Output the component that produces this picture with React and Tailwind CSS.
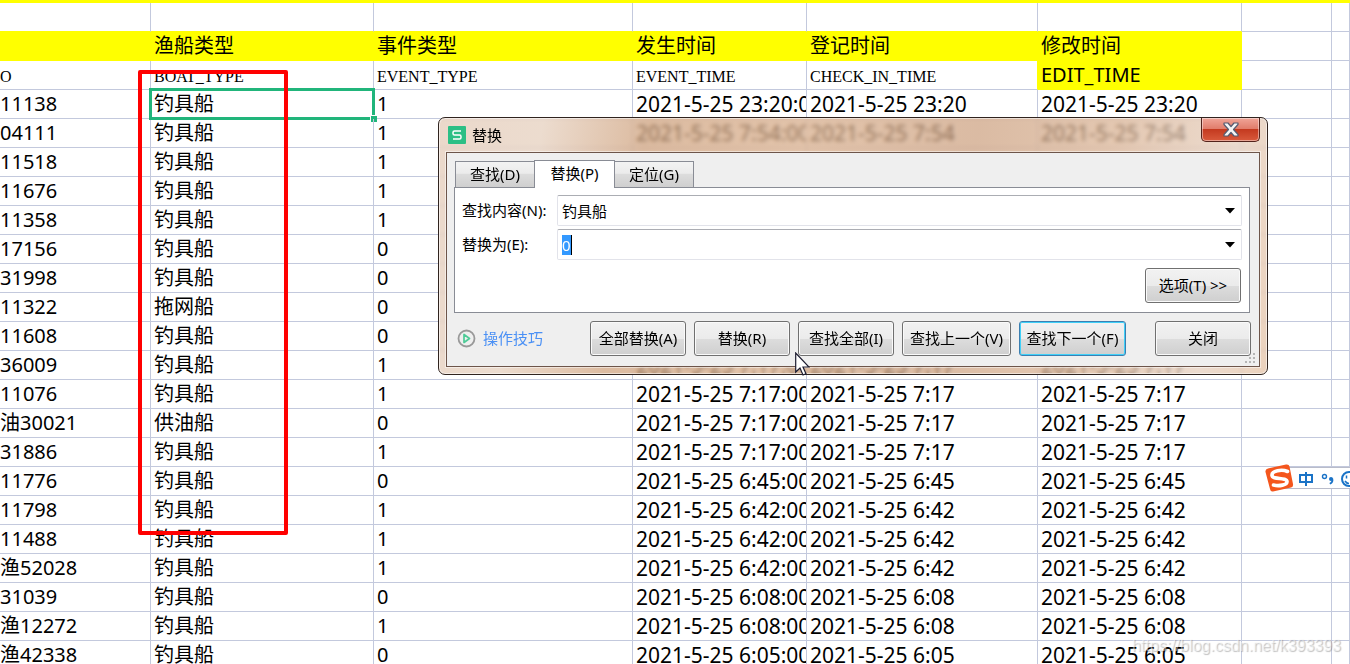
import React from 'react'
import { clsx } from 'clsx'

const rows = [
  ['11138', '钓具船', '1', '2021-5-25 23:20:00', '2021-5-25 23:20'],
  ['04111', '钓具船', '1', '2021-5-25 7:54:00', '2021-5-25 7:54'],
  ['11518', '钓具船', '1', '', ''],
  ['11676', '钓具船', '1', '', ''],
  ['11358', '钓具船', '1', '', ''],
  ['17156', '钓具船', '0', '', ''],
  ['31998', '钓具船', '0', '', ''],
  ['11322', '拖网船', '0', '', ''],
  ['11608', '钓具船', '0', '', ''],
  ['36009', '钓具船', '1', '2021-5-25 7:17:00', '2021-5-25 7:17'],
  ['11076', '钓具船', '1', '2021-5-25 7:17:00', '2021-5-25 7:17'],
  ['油30021', '供油船', '0', '2021-5-25 7:17:00', '2021-5-25 7:17'],
  ['31886', '钓具船', '1', '2021-5-25 7:17:00', '2021-5-25 7:17'],
  ['11776', '钓具船', '0', '2021-5-25 6:45:00', '2021-5-25 6:45'],
  ['11798', '钓具船', '1', '2021-5-25 6:42:00', '2021-5-25 6:42'],
  ['11488', '钓具船', '1', '2021-5-25 6:42:00', '2021-5-25 6:42'],
  ['渔52028', '钓具船', '1', '2021-5-25 6:42:00', '2021-5-25 6:42'],
  ['31039', '钓具船', '0', '2021-5-25 6:08:00', '2021-5-25 6:08'],
  ['渔12272', '钓具船', '1', '2021-5-25 6:08:00', '2021-5-25 6:08'],
  ['渔42338', '钓具船', '0', '2021-5-25 6:05:00', '2021-5-25 6:05'],
]

const titles = ['', '渔船类型', '事件类型', '发生时间', '登记时间', '修改时间']
const fields = ['O', 'BOAT_TYPE', 'EVENT_TYPE', 'EVENT_TIME', 'CHECK_IN_TIME', 'EDIT_TIME']

export default function App() {
  return (
    <div className="relative h-screen overflow-hidden bg-white font-['Noto_Sans','Noto_Sans_CJK_SC',sans-serif] text-black">
      <div className="h-[3px] bg-[#ffff00]" />
      <Sheet />
      <div className="absolute left-[138px] top-[70px] h-[465px] w-[150px] rounded-[2px] border-4 border-[#ff0000]" />
      <ReplaceDialog />
      <ImeBar />
      <p className="absolute bottom-[6px] right-[9px] font-['Liberation_Sans',sans-serif] text-base leading-6 text-white/50 [text-shadow:1px_1px_1px_rgba(0,0,0,0.25)]">
        https://blog.csdn.net/k393393
      </p>
      <Cursor />
    </div>
  )
}

function Cell({ className, flush, children }) {
  return (
    <td
      className={clsx(
        'h-[29px] overflow-hidden whitespace-nowrap border-b border-r py-0 pr-0 leading-7',
        flush ? 'pl-0' : 'pl-[3px]',
        className
      )}
    >
      {children}
    </td>
  )
}

function Sheet() {
  const line = 'border-[#c3c9dd]'
  const yellow = 'border-[#ffff00] bg-[#ffff00] text-xl leading-7'

  return (
    <table className="w-full table-fixed border-separate border-spacing-0">
      <colgroup>
        <col className="w-[151px]" />
        <col className="w-[223px]" />
        <col className="w-[259px]" />
        <col className="w-[174px]" />
        <col className="w-[231px]" />
        <col className="w-[204px]" />
        <col className="w-[90px]" />
        <col />
      </colgroup>
      <tbody>
        <tr>
          {titles.map((_, i) => (
            <Cell key={i} className="border-b-[#ffff00] border-r-[#c3c9dd]" />
          ))}
          <Cell className={line} />
          <Cell className={line} />
        </tr>
        <tr>
          {titles.map((title, i) => (
            <Cell key={i} className={yellow}>{title}</Cell>
          ))}
          <Cell className={line} />
          <Cell className={line} />
        </tr>
        <tr>
          {fields.map((field, i) => (
            <Cell
              key={field}
              flush={i === 0}
              className={clsx(
                i === 5 ? yellow : "font-['Liberation_Serif',serif] text-base",
                i === 4 && 'border-b-[#c3c9dd] border-r-[#ffff00]',
                i < 4 && line
              )}
            >
              {i === 5 ? field : <span className="block pt-1 leading-6">{field}</span>}
            </Cell>
          ))}
          <Cell className={line} />
          <Cell className={line} />
        </tr>
        {rows.map(([id, boat, event, time, checked], i) => (
          <tr key={i}>
            <Cell flush className={clsx(line, 'text-xl leading-7')}>{id}</Cell>
            <Cell className={clsx(line, 'relative overflow-visible text-xl leading-7')}>
              {boat}
              {i === 0 && <Selection />}
            </Cell>
            <Cell className={clsx(line, 'text-xl leading-7')}>{event}</Cell>
            <Cell className={clsx(line, 'text-[21px]')}>{time}</Cell>
            <Cell className={clsx(line, 'text-[21px]')}>{checked}</Cell>
            <Cell className={clsx(line, 'text-[21px]')}>{checked}</Cell>
            <Cell className={line} />
            <Cell className={line} />
          </tr>
        ))}
      </tbody>
    </table>
  )
}

function Selection() {
  return (
    <div className="absolute -inset-x-[2px] -inset-y-[2px] border-[3px] border-[#21b57b]">
      <div className="absolute -bottom-[5px] -right-[5px] size-[7px] border-l border-t border-white bg-[#21b57b]" />
    </div>
  )
}

function ReplaceDialog() {
  return (
    <section
      aria-label="替换"
      className="absolute left-[438px] top-[117px] flex w-[830px] flex-col rounded-[7px] border border-[#30241f] bg-[linear-gradient(100deg,rgba(226,200,180,0.7)_0%,rgba(228,205,186,0.7)_12%,rgba(205,158,120,0.7)_24%,rgba(214,170,134,0.7)_42%,rgba(203,158,124,0.7)_62%,rgba(216,176,144,0.7)_78%,rgba(228,204,186,0.7)_92%,rgba(226,190,160,0.7)_100%)] px-[7px] pb-[7px] text-[15px] shadow-[inset_0_0_0_1px_rgba(255,255,255,0.55)] backdrop-blur-[2px]"
    >
      <header className="flex h-[34px] items-start justify-between">
        <div className="flex items-center gap-[6px] pl-[2px] pt-[5px]">
          <WpsIcon />
          <h1 className="leading-6">替换</h1>
        </div>
        <button
          type="button"
          aria-label="关闭窗口"
          className="flex h-[24px] w-[59px] items-center justify-center rounded-b-[5px] border border-t-0 border-[#53231c] bg-[linear-gradient(#f0a598_0%,#e07a68_50%,#c43a20_50%,#d95a3c_100%)] shadow-[inset_0_0_0_1px_rgba(255,255,255,0.45)]"
        >
          <svg className="h-[15px] w-[16px]" viewBox="0 0 16 15">
            <path
              d="M1 1h4l3 3.5L11 1h4v1.5L10.500 7.500 15 12.500V14h-4l-3-3.500L5 14H1v-1.500L5.500 7.500 1 2.500z"
              fill="#f4f4f4"
              stroke="#555a70"
              strokeWidth="1.200"
              strokeLinejoin="round"
            />
          </svg>
        </button>
      </header>

      <div className="relative border border-[#6d554a] bg-[#efefef] px-[7px] pb-[10px] pt-[7px] outline outline-1 outline-white/50">
        <div role="tablist" className="relative flex items-end pl-px">
          <Tab label="查找(D)" />
          <Tab label="替换(P)" active />
          <Tab label="定位(G)" />
        </div>
        <div className="-mt-px mr-[2px] flex flex-col gap-[3px] border border-[#898c95] bg-white pb-[9px] pl-[7px] pr-[7px] pt-[7px]">
          <Field id="find" label="查找内容(N):">
            <input id="find" defaultValue="钓具船" className="h-full min-w-0 flex-1 bg-transparent outline-none" />
          </Field>
          <Field id="replace" label="替换为(E):">
            <div className="relative h-full min-w-0 flex-1">
              <div className="absolute left-0 top-[5px] h-5 w-[10px] border-r border-black bg-[#3399ff]" />
              <input id="replace" defaultValue="0" className="relative h-full w-full bg-transparent text-white outline-none" />
            </div>
          </Field>
          <div className="flex justify-end pr-px pt-[5px]">
            <DialogButton className="w-[96px]">选项(T) &gt;&gt;</DialogButton>
          </div>
        </div>

        <div className="flex items-center pt-2">
          <a href="#tips" className="flex items-center gap-[7px] pl-[3px] text-[#4a90f5]">
            <svg className="size-[19px]" viewBox="0 0 19 19" fill="none">
              <circle cx="9.500" cy="9.500" r="8" stroke="#999" strokeWidth="1.800" />
              <path d="M7 5.500v8l5.500-4z" stroke="#4dcb97" strokeWidth="1.700" strokeLinejoin="round" />
            </svg>
            操作技巧
          </a>
          <div className="ml-auto flex gap-2">
            <DialogButton className="w-[96px]">全部替换(A)</DialogButton>
            <DialogButton className="w-[96px]">替换(R)</DialogButton>
            <DialogButton className="w-[96px]">查找全部(I)</DialogButton>
            <DialogButton className="w-[109px]">查找上一个(V)</DialogButton>
            <DialogButton className="w-[107px]" primary>查找下一个(F)</DialogButton>
          </div>
          <DialogButton className="ml-[29px] mr-px w-[96px]">关闭</DialogButton>
        </div>
        <Grip />
      </div>
    </section>
  )
}

function Tab({ label, active }) {
  return (
    <button
      type="button"
      role="tab"
      aria-selected={!!active}
      className={clsx(
        'border border-[#898c95] text-center',
        active
          ? 'relative z-10 -mx-px h-[28px] w-[81px] border-b-0 bg-white pb-[2px]'
          : 'h-[27px] w-[80px] bg-[linear-gradient(#f3f3f3_0%,#ebebeb_45%,#dcdcdc_50%,#cfcfcf_100%)]'
      )}
    >
      {label}
    </button>
  )
}

function Field({ id, label, children }) {
  return (
    <div className="flex items-center">
      <label htmlFor={id} className="w-[95px]">{label}</label>
      <div className="flex h-[31px] flex-1 items-center rounded-[2px] border border-[#e2e3ea] border-t-[#abadb3] bg-white pl-1 pr-[6px]">
        {children}
        <svg className="h-[6px] w-[10px]" viewBox="0 0 10 6">
          <path d="M0 0h10L5 5.500z" />
        </svg>
      </div>
    </div>
  )
}

function DialogButton({ className, primary, children }) {
  return (
    <button
      type="button"
      className={clsx(
        'h-[35px] whitespace-nowrap rounded-[3px] border bg-[linear-gradient(#f2f2f2_0%,#ebebeb_50%,#dddddd_50%,#cfcfcf_100%)]',
        primary
          ? 'border-[#3c7fb1] shadow-[inset_0_0_0_1px_#3fd0f8]'
          : 'border-[#707070] shadow-[inset_0_0_0_1px_#fafafa]',
        className
      )}
    >
      {children}
    </button>
  )
}

function Grip() {
  return (
    <svg className="absolute bottom-[2px] right-[3px] size-[11px]" viewBox="0 0 11 11" fill="#b5b5b5">
      <path d="M8 0h2v2H8zM4 4h2v2H4zM8 4h2v2H8zM0 8h2v2H0zM4 8h2v2H4zM8 8h2v2H8z" />
    </svg>
  )
}

function WpsIcon() {
  return (
    <svg className="size-[18px]" viewBox="0 0 18 18" fill="none">
      <rect width="18" height="18" rx="1" fill="#2bbf85" />
      <path d="M13 5H6.500Q5 5 5 6.500V7.500Q5 9 6.500 9h5Q13 9 13 10.500v1Q13 13 11.500 13H5" stroke="#fff" strokeWidth="1.500" />
    </svg>
  )
}

function ImeBar() {
  return (
    <div className="absolute right-0 top-[464px] flex h-[28px] w-[86px] items-center">
      <div className="absolute inset-y-[3px] left-[20px] right-0 border-y border-[#b9bccb] bg-white" />
      <svg className="relative h-[28px] w-[86px]" viewBox="0 0 86 28" fill="none">
        <path d="M4 4.500 22 0.500Q25 0 25.500 2.500L29 20Q29.500 23 27 23.500L9 27.500Q6.500 28 6 25L1.500 8Q1 5.200 4 4.500z" fill="#f4561d" />
        <path d="M23.500 7.500C18 5 7.500 6.500 8 11.500c.5 4.500 14.500 1.500 15 6 .3 3.500-8 5-13.500 3.500" stroke="#fff" strokeWidth="3.600" strokeLinecap="round" />
        <path d="M36 11h12v7H36zM42 8v14" stroke="#1a73c7" strokeWidth="2" />
        <circle cx="60.500" cy="12.500" r="2" stroke="#1a73c7" strokeWidth="1.400" />
        <circle cx="67" cy="15" r="2" fill="#1a73c7" />
        <path d="M68.200 14.500c.8 2.500-.4 4.300-2.400 5.300" stroke="#1a73c7" strokeWidth="1.800" />
        <circle cx="85" cy="15" r="7" stroke="#1a73c7" strokeWidth="2" />
        <path d="M82.500 11.500v3M81 17q1.500 2.500 4 2.500" stroke="#1a73c7" strokeWidth="1.500" />
      </svg>
    </div>
  )
}

function Cursor() {
  return (
    <svg className="absolute left-[795px] top-[352px] h-[24px] w-[15px]" viewBox="0 0 15 24">
      <path d="M.7 1v19l4.300-4 3 7 3-1.300-3-6.700h6z" fill="#fff" stroke="#1c1c30" strokeWidth="1.200" />
    </svg>
  )
}
